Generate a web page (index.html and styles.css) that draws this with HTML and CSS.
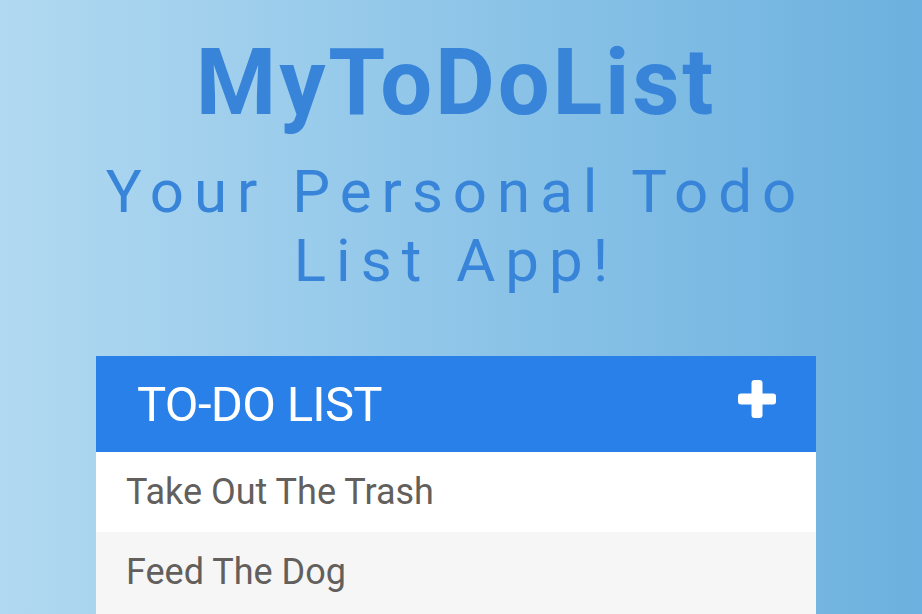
FILE: index.html
```html
<!DOCTYPE html>
<html>
<head>
<meta charset="utf-8">
<link rel="stylesheet" href="styles.css">
</head>
<body>
<main class="page">
  <header class="hero">
    <h1 class="title">MyToDoList</h1>
    <p class="subtitle">Your Personal Todo<br>List App!</p>
  </header>
  <section class="card">
    <div class="card-head">
      <h2 class="card-title">TO-DO LIST</h2>
      <svg class="plus" width="38" height="38" viewBox="0 0 38 38" aria-hidden="true">
        <rect x="13.5" y="0" width="11" height="38" rx="3" fill="#fff"/>
        <rect x="0" y="13.5" width="38" height="11" rx="3" fill="#fff"/>
      </svg>
    </div>
    <ul class="items">
      <li class="item">Take Out The Trash</li>
      <li class="item item-alt">Feed The Dog</li>
    </ul>
  </section>
</main>
</body>
</html>
```

FILE: styles.css
```css
html, body {
  margin: 0;
  padding: 0;
  height: 100%;
  overflow: hidden;
}
body {
  background: linear-gradient(90deg, #b1d9f1 0%, #6cb1df 100%);
  font-family: Roboto, "Noto Sans", sans-serif;
}
.page {
  padding-right: 10px;
  display: flex;
  flex-direction: column;
  align-items: center;
}
.hero {
  text-align: center;
  color: #3784d9;
}
.title {
  margin: 28px 0 0;
  font-size: 92px;
  font-weight: 700;
  line-height: 110px;
  letter-spacing: 2.8px;
}
.subtitle {
  margin: 19px 0 0;
  font-size: 60px;
  font-weight: 400;
  line-height: 69px;
  letter-spacing: 10px;
}
.card {
  width: 720px;
  margin-top: 61px;
  background: #fff;
}
.card-head {
  height: 96px;
  background: #2880e8;
  display: flex;
  align-items: center;
  justify-content: space-between;
  padding: 0 40px 0 41px;
}
.card-title {
  margin: 0;
  color: #fff;
  font-weight: 400;
  font-size: 49px;
  letter-spacing: -0.7px;
}
.plus {
  display: block;
  margin-bottom: 10px;
}
.items {
  list-style: none;
  margin: 0;
  padding: 0;
}
.item {
  height: 80px;
  display: flex;
  align-items: center;
  padding-left: 30px;
  font-size: 36px;
  color: #625f5d;
}
.item-alt {
  height: 90px;
  padding-bottom: 10px;
  box-sizing: border-box;
  background: #f6f6f6;
}
```
